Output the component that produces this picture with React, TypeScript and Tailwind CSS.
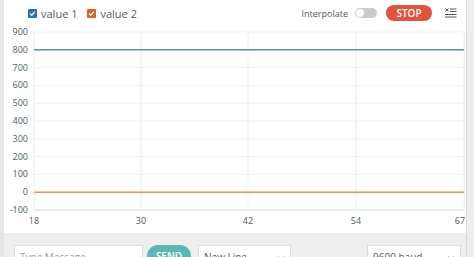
import React from 'react'

const yTicks = [900, 800, 700, 600, 500, 400, 300, 200, 100, 0, -100]
const xTicks = [
  { label: '18', x: 30 },
  { label: '30', x: 137 },
  { label: '42', x: 244 },
  { label: '54', x: 352 },
  { label: '67', x: 460 },
]

const top = 7
const step = 17.8
const yOf = (v: number) => top + ((900 - v) / 100) * step

const Check = ({ color }: { color: string }) => (
  <span className={`flex h-[9px] w-[9px] items-center justify-center rounded-[1px] ${color}`}>
    <svg width="7" height="7" viewBox="0 0 8 8" fill="none">
      <path d="M1.2 4.2 L3.2 6 L6.8 1.8" stroke="white" strokeWidth="1.4" />
    </svg>
  </span>
)

const Chevron = () => (
  <svg width="8" height="6" viewBox="0 0 8 6" fill="none">
    <path d="M1 1 L4 4 L7 1" stroke="#b8b8b8" strokeWidth="1" />
  </svg>
)

export default function App() {
  return (
    <div className="flex h-[257px] w-[474px] overflow-hidden bg-white font-['Open_Sans',sans-serif] text-[#4e5b61]">
      <div className="w-[4px] bg-[#e6e6e6]" />

      <div className="flex w-[462px] flex-col">
        {/* header */}
        <div className="flex h-[25px] shrink-0 items-center pt-[1px]">
          <div className="ml-[24px] flex items-center gap-[4px]">
            <Check color="bg-[#2474b4]" />
            <span className="text-[11px] leading-none">value 1</span>
          </div>
          <div className="ml-[10px] flex items-center gap-[4px]">
            <Check color="bg-[#d5642a]" />
            <span className="text-[11px] leading-none">value 2</span>
          </div>
          <span className="ml-auto text-[9px] leading-none">Interpolate</span>
          <div className="ml-[7px] flex h-[10px] w-[22px] items-center rounded-full bg-[#c9cccd] px-[1px]">
            <div className="h-[8px] w-[8px] rounded-full bg-white" />
          </div>
          <button className="ml-[9px] flex h-[16px] w-[46px] items-center justify-center rounded-full bg-[#e0533f] text-[10px] font-semibold leading-none text-white">
            STOP
          </button>
          <div className="mr-[9px] ml-[13px] flex w-[12px] justify-center">
            <svg width="12" height="10" viewBox="0 0 12 10" fill="none" stroke="#4e5b61" strokeWidth="1">
              <path d="M0.5 0.5 L3.5 3.5 M3.5 0.5 L0.5 3.5" />
              <path d="M5 1 H11.5 M5 3.5 H11.5 M0 6.5 H11.5 M0 9 H11.5" />
            </svg>
          </div>
        </div>

        {/* chart */}
        <div className="h-[208px] shrink-0">
          <svg className="block" width="462" height="208" viewBox="0 0 462 208" fontFamily="Open Sans, sans-serif" fontSize="9" fill="#4e5b61">
            {yTicks.map((v) => (
              <g key={v}>
                <line x1="30" x2="460" y1={yOf(v)} y2={yOf(v)} stroke="#f1f1f1" strokeWidth="1" />
                <text x="24" y={yOf(v) + 3} textAnchor="end">{v}</text>
              </g>
            ))}
            {xTicks.map((t) => (
              <g key={t.label}>
                <line x1={t.x} x2={t.x} y1={top} y2={yOf(-100)} stroke="#ececec" strokeWidth="1" />
                <text x={t.label === '67' ? 456 : t.x} y="199" textAnchor="middle">{t.label}</text>
              </g>
            ))}
            <line x1="30" x2="460" y1={yOf(-100)} y2={yOf(-100)} stroke="#e2e2e2" />
            <line x1="30" x2="460" y1={yOf(800)} y2={yOf(800)} stroke="#5d8fae" strokeWidth="1.5" />
            <line x1="30" x2="460" y1={yOf(0)} y2={yOf(0)} stroke="#e39462" strokeWidth="1.5" />
          </svg>
        </div>

        {/* footer */}
        <div className="flex flex-1 items-start bg-[#eeeeee] pt-[12px] pl-[10px]">
          <div className="h-[24px] w-[129px] shrink-0 border border-[#dcdcdc] bg-white pl-[5px] pt-[4px] text-[10px] text-[#9a9fa2]">
            Type Message
          </div>
          <button className="ml-[4px] h-[22px] w-[44px] shrink-0 rounded-full bg-[#5cb7b3] pt-[1px] text-[10px] font-semibold text-white">
            SEND
          </button>
          <div className="ml-[7px] flex h-[24px] w-[93px] shrink-0 items-start justify-between border border-[#dcdcdc] bg-white px-[5px] pt-[4px] text-[10px]">
            <span>New Line</span>
            <span className="pt-[5px]"><Chevron /></span>
          </div>
          <div className="ml-[76px] flex h-[24px] w-[94px] shrink-0 items-start justify-between border border-[#dcdcdc] bg-white px-[5px] pt-[4px] text-[10px]">
            <span>9600 baud</span>
            <span className="pt-[5px]"><Chevron /></span>
          </div>
        </div>
      </div>

      <div className="w-[8px] border-l border-[#dadada] bg-[#ededed]" />
    </div>
  )
}
